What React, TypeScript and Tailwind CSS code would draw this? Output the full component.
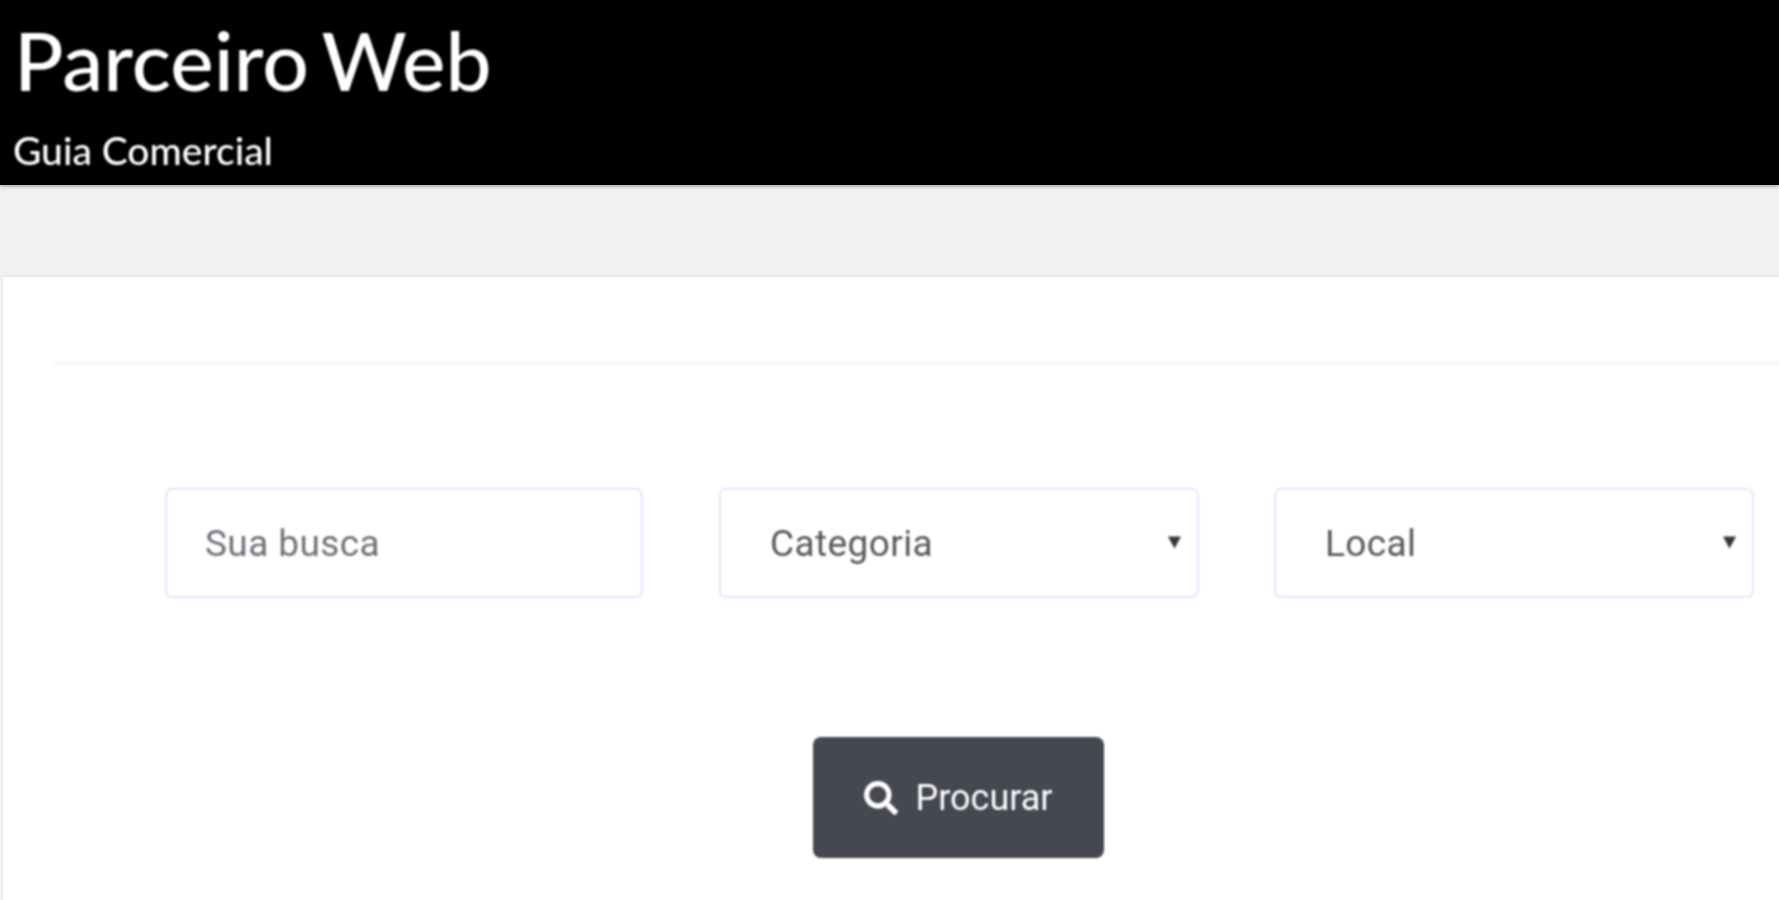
import { FaSearch } from "react-icons/fa";

function Select({ label }: { label: string }) {
  return (
    <div className="relative w-[480px] blur-[0.8px] last:-ml-[1px]">
      <select className="h-[110px] w-full appearance-none rounded-[7px] border-2 border-[#e6e4fb] bg-white pl-[49px] pt-[2px] font-['Roboto',sans-serif] text-[37px] tracking-[0.4px] text-[#55595e] outline-none">
        <option>{label}</option>
      </select>
      <svg className="absolute right-[18px] top-[47px] h-[14px] w-[13px] text-[#33383e]" viewBox="0 0 12 12" fill="currentColor">
        <path d="M0 1h12L6 12z" />
      </svg>
    </div>
  );
}

export default function App() {
  return (
    <div className="min-h-[900px] bg-[#f1f1f1] font-['Roboto',sans-serif]">
      <header className="h-[185px] bg-black pl-[14px] pt-[14px] font-['Lato',sans-serif] text-white shadow-[0_1px_4px_rgba(0,0,0,0.4)]">
        <h1 className="text-[82px] font-medium leading-[90px] [word-spacing:-7px] blur-[0.8px]">Parceiro Web</h1>
        <p className="mt-[24px] -ml-[1px] text-[39px] font-medium leading-[44px] blur-[0.8px]">Guia Comercial</p>
      </header>
      <main className="ml-[3px] mt-[92px] h-[623px] bg-white pt-[84px] shadow-[0_-1px_3px_rgba(0,0,0,0.08)]">
        <div className="ml-[50px] h-[4px] bg-[#f8f8f8] blur-[0.8px]" />
        <div className="mt-[123px] flex gap-[76px] pl-[162px]">
          <input
            placeholder="Sua busca"
            className="h-[110px] w-[478px] rounded-[7px] border-2 border-[#e6e4fb] bg-white pl-[38px] font-['Roboto',sans-serif] text-[37px] tracking-[0.4px] text-[#55595e] outline-none blur-[0.8px] placeholder:text-[#6d7278]"
          />
          <Select label="Categoria" />
          <Select label="Local" />
        </div>
        <div className="mt-[139px] flex pl-[810px]">
          <button className="flex h-[121px] w-[291px] items-center justify-center gap-[17px] rounded-[8px] bg-[#454751] text-[36px] text-white blur-[0.8px]">
            <FaSearch className="h-[34px] w-[34px]" />
            Procurar
          </button>
        </div>
      </main>
    </div>
  );
}
